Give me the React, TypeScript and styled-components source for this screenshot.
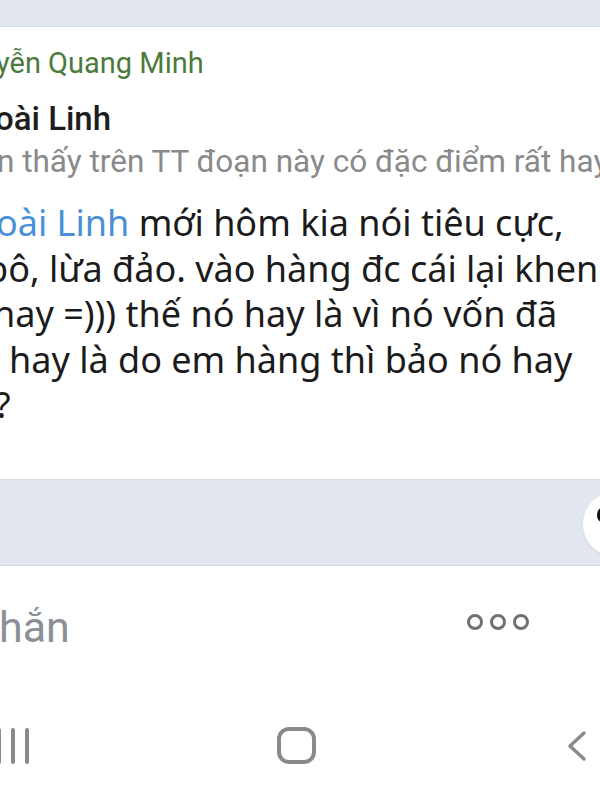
import React from "react";
import styled, {createGlobalStyle} from "styled-components";

const GlobalStyle = createGlobalStyle`
	html, body {
		margin: 0;
		padding: 0;
		background: #ffffff;
	}
	body {
		font-family: Roboto, "Noto Sans", "Liberation Sans", sans-serif;
		overflow: hidden;
	}
`;

const Screen = styled.div`
	width: 600px;
	height: 800px;
	display: flex;
	flex-direction: column;
	overflow: hidden;
	background: #ffffff;
`;

const Band = styled.div<{$height: number}>`
	height: ${p => p.$height}px;
	flex: none;
	background: #e3e8f0;
	border-top: 1px solid #d4dae2;
	border-bottom: 1px solid #d4dae2;
	box-sizing: border-box;
`;

const TopBand = styled(Band)`
	border-top: none;
`;

const Card = styled.div`
	position: relative;
	height: 452px;
	flex: none;
	display: flex;
	flex-direction: column;
	padding-top: 17px;
	box-sizing: border-box;
`;

const Line = styled.div<{$shift?: number}>`
	white-space: nowrap;
	margin-left: ${p => p.$shift ?? 0}px;
`;

const Name = styled(Line)`
	font-size: 29px;
	line-height: 38px;
	color: #4b7a3c;
`;

const Author = styled(Line)`
	margin-top: 17px;
	font-size: 33px;
	font-weight: 500;
	line-height: 40px;
	color: #1d1d1d;
`;

const Preview = styled(Line)`
	margin-top: 4px;
	font-size: 31.5px;
	line-height: 38px;
	color: #8a8a8a;
`;

const Body = styled.div`
	margin-top: 19px;
	display: flex;
	flex-direction: column;
	font-family: "Noto Sans", Roboto, sans-serif;
	font-size: 36px;
	line-height: 45.5px;
	color: #1b1b1b;
`;

const Mention = styled.span`
	color: #4a8fd8;
`;

const Bubble = styled.div`
	position: absolute;
	left: 583px;
	top: 465px;
	width: 64px;
	height: 64px;
	border-radius: 50%;
	background: #ffffff;
	box-shadow: 0 0 0 1px #e4e6ea, 0 1px 3px rgba(0, 0, 0, 0.12);
	z-index: 2;
	&::before {
		content: "";
		position: absolute;
		left: 14px;
		top: 16px;
		width: 10px;
		height: 14px;
		border-radius: 50%;
		background: #111;
	}
`;

const Bottom = styled.div`
	flex: 1;
	display: flex;
	flex-direction: column;
`;

const Composer = styled.div`
	height: 120px;
	display: flex;
	align-items: center;
	justify-content: space-between;
	padding-right: 71px;
`;

const Placeholder = styled(Line)`
	font-size: 43px;
	line-height: 50px;
	color: #8b9097;
	margin-top: 2px;
`;

const Dots = styled.div`
	display: flex;
	gap: 7px;
	margin-top: -8px;
`;

const Dot = styled.span`
	width: 10px;
	height: 10px;
	border: 3px solid #6f7175;
	border-radius: 50%;
`;

const NavBar = styled.div`
	flex: 1;
	display: flex;
	align-items: flex-start;
	padding-top: 41px;
	box-sizing: border-box;
`;

const Bars = styled.div`
	display: flex;
	gap: 10px;
	margin-left: -3px;
	margin-top: 1px;
	span {
		width: 4px;
		height: 36px;
		border-radius: 2px;
		background: #8a8a8a;
	}
`;

const HomeKey = styled.div`
	margin-left: 248px;
	width: 31px;
	height: 29px;
	border: 4px solid #8a8a8a;
	border-radius: 12px;
`;

const BackKey = styled.svg`
	margin-left: auto;
	margin-right: 10px;
	margin-top: 3px;
`;

export default function App() {
	return (
		<Screen>
			<GlobalStyle />
			<TopBand $height={27} />
			<Card>
				<Name $shift={-4}>yễn Quang Minh</Name>
				<Author $shift={-5}>oài Linh</Author>
				<Preview $shift={-3}>n thấy trên TT đoạn này có đặc điểm rất hay</Preview>
				<Body>
					<Line $shift={-4}>
						<Mention>oài Linh</Mention> mới hôm kia nói tiêu cực,
					</Line>
					<Line $shift={-14}>bô, lừa đảo. vào hàng đc cái lại khen</Line>
					<Line $shift={-7}>hay =))) thế nó hay là vì nó vốn đã</Line>
					<Line $shift={9}>hay là do em hàng thì bảo nó hay</Line>
					<Line $shift={-5}>?</Line>
				</Body>
				<Bubble />
			</Card>
			<Band $height={87} />
			<Bottom>
				<Composer>
					<Placeholder $shift={-1}>hắn</Placeholder>
					<Dots>
						<Dot />
						<Dot />
						<Dot />
					</Dots>
				</Composer>
				<NavBar>
					<Bars>
						<span />
						<span />
						<span />
					</Bars>
					<HomeKey />
					<BackKey width="26" height="34" viewBox="0 0 26 34">
						<path d="M20 3 L6 16 L20 29" fill="none" stroke="#8a8a8a" strokeWidth="3.5" strokeLinecap="round" strokeLinejoin="round" />
					</BackKey>
				</NavBar>
			</Bottom>
		</Screen>
	);
}
